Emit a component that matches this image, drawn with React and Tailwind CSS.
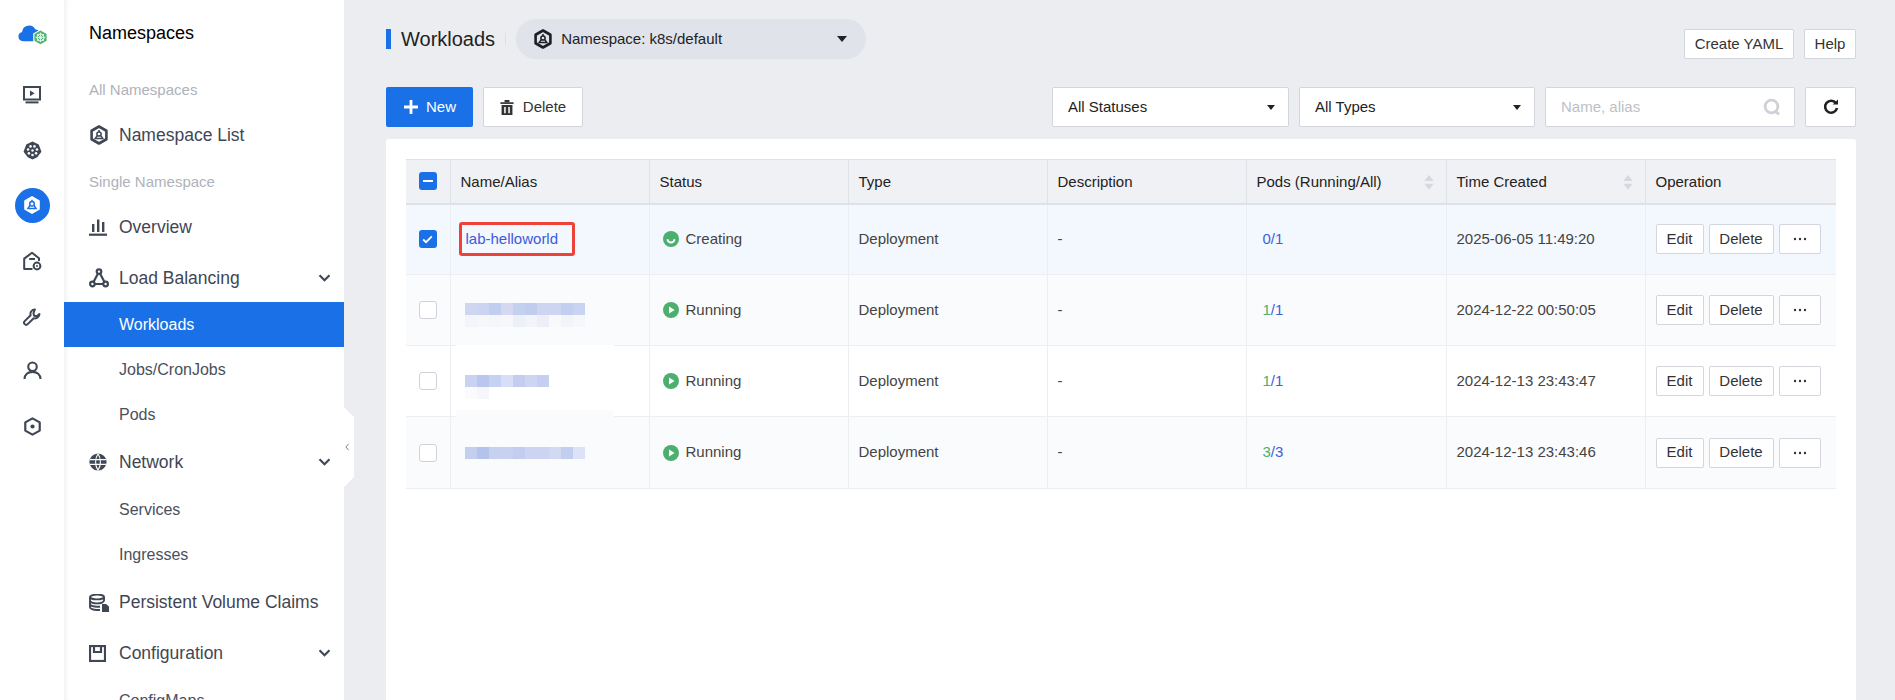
import React from "react";

const C = "#3f4654";

function NsIcon({ className = "", color = C }) {
  return (
    <svg viewBox="0 0 20 20" className={className} fill="none">
      <path d="M10 1.5 17.4 5.75V14.25L10 18.5 2.6 14.25V5.75Z" stroke={color} strokeWidth="2.6" strokeLinejoin="round" />
      <circle cx="10" cy="9" r="2.1" stroke={color} strokeWidth="1.5" />
      <path d="M8.3 10.6 6 13.6H14L11.7 10.6M10 6.9V5" stroke={color} strokeWidth="1.5" strokeLinejoin="round" />
    </svg>
  );
}

function Logo() {
  return (
    <svg viewBox="0 0 30 22" className="w-[30px] h-[22px]">
      <path d="M5 17.2a4.6 4.6 0 0 1-.9-9.1A7 7 0 0 1 17.4 5.6a5.8 5.8 0 0 1 6 5.6 5.8 5.8 0 0 1-5 6Z" fill="#1a70e6" />
      <path d="M22.5 5.2 29.8 9.4V17.4L22.5 21.6 15.2 17.4V9.4Z" fill="#fff" />
      <path d="M22.5 6.6 28.6 10.1V16.7L22.5 20.2 16.4 16.7V10.1Z" fill="#4fb172" />
      <circle cx="22.5" cy="13.4" r="3.4" fill="none" stroke="#e4f5ea" strokeWidth="1.1" />
      <path d="M22.5 8.6V18.2M17.7 13.4H27.3M19.1 10 25.9 16.8M25.9 10 19.1 16.8" stroke="#e4f5ea" strokeWidth=".9" />
    </svg>
  );
}

function ScreenIcon() {
  return (
    <svg viewBox="0 0 18 18" className="w-[18px] h-[18px]" fill="none">
      <rect x="1" y="1" width="16" height="12.5" stroke={C} strokeWidth="2" />
      <path d="M7 4.4V10.2L11.6 7.3Z" fill={C} />
      <rect x="2.5" y="15.4" width="13" height="2" fill={C} />
    </svg>
  );
}

function HelmIcon() {
  const dots = [0, 1, 2, 3, 4, 5, 6].map((i) => {
    const a = ((i + 0.5) * 2 * Math.PI) / 7 - Math.PI / 2;
    return [10 + 4.8 * Math.cos(a), 10 + 4.8 * Math.sin(a)];
  });
  return (
    <svg viewBox="0 0 20 20" className="w-[19px] h-[19px]" fill="none">
      <path d="M10 .4 16.6 3.6 19.4 11.2 15 17 10 19.6 5 17 .6 11.2 3.4 3.6Z" fill={C} />
      {dots.map(([x, y], i) => <circle key={i} cx={x} cy={y} r="1.35" fill="#fff" />)}
      <circle cx="10" cy="10" r="1.3" fill="#fff" />
    </svg>
  );
}

function HouseIcon() {
  return (
    <svg viewBox="0 0 20 20" className="w-[20px] h-[20px]" fill="none">
      <path d="M10.5 18H2.2V7.6L10 1.8 17 7.2V10" stroke={C} strokeWidth="2" strokeLinejoin="round" />
      <path d="M7.2 8H13" stroke={C} strokeWidth="2" />
      <circle cx="15" cy="15" r="3.4" stroke={C} strokeWidth="2" />
      <circle cx="15" cy="15" r="1" fill={C} />
    </svg>
  );
}

function WrenchIcon() {
  return (
    <svg viewBox="0 0 20 20" className="w-[18px] h-[18px]" fill="none">
      <path d="M13.2 1.6a4.9 4.9 0 0 0-4.7 6.4L1.9 14.6a2.3 2.3 0 0 0 3.3 3.3l6.7-6.6a4.9 4.9 0 0 0 6.4-4.7l-3 2.6-3-.6-.7-3Z" stroke={C} strokeWidth="2.2" strokeLinejoin="round" />
    </svg>
  );
}

function UserIcon() {
  return (
    <svg viewBox="0 0 20 20" className="w-[19px] h-[19px]" fill="none">
      <circle cx="10" cy="6" r="4.5" stroke={C} strokeWidth="2.2" />
      <path d="M1.6 19c0-4.6 3.6-7.6 8.4-7.6s8.4 3 8.4 7.6" stroke={C} strokeWidth="2.2" />
    </svg>
  );
}

function HexDotIcon() {
  return (
    <svg viewBox="0 0 20 20" className="w-[19px] h-[19px]" fill="none">
      <path d="M10 1.4 17.6 5.7V14.3L10 18.6 2.4 14.3V5.7Z" stroke={C} strokeWidth="2.3" strokeLinejoin="round" />
      <circle cx="10" cy="10" r="2.2" fill={C} />
    </svg>
  );
}

function BarsIcon() {
  return (
    <svg viewBox="0 0 18 18" className="w-[18px] h-[18px]" fill={C}>
      <rect x="3" y="6" width="2.4" height="8" />
      <rect x="8" y="1.5" width="2.4" height="12.5" />
      <rect x="13" y="4" width="2.4" height="10" />
      <rect x="0" y="15.6" width="18" height="2.2" />
    </svg>
  );
}

function LbIcon() {
  return (
    <svg viewBox="0 0 20 20" className="w-[20px] h-[20px]" fill="none" stroke={C} strokeWidth="2.2">
      <circle cx="10" cy="3.6" r="2.3" />
      <circle cx="3.4" cy="16" r="2.3" />
      <circle cx="16.6" cy="16" r="2.3" />
      <path d="M8.9 5.7 4.5 14M11.1 5.7 15.5 14M5.7 16H14.3" />
    </svg>
  );
}

function GlobeIcon() {
  return (
    <svg viewBox="0 0 18 18" className="w-[18px] h-[18px]">
      <circle cx="9" cy="9" r="8.6" fill={C} />
      <path d="M1 6.6H17M1 11.4H17M9 .8C5.8 5.5 5.8 12.5 9 17.2M9 .8C12.2 5.5 12.2 12.5 9 17.2" stroke="#fff" strokeWidth="1.1" fill="none" />
    </svg>
  );
}

function DbIcon() {
  return (
    <svg viewBox="0 0 20 18" className="w-[20px] h-[18px]" fill="none">
      <ellipse cx="8" cy="3" rx="7" ry="2.4" stroke={C} strokeWidth="1.9" />
      <path d="M1 3V13.2C1 14.6 4 16 8 16H11M1 6.6C1 8 4 9.4 8 9.4S15 8 15 6.6V3M1 10C1 11.4 4 12.8 8 12.8H11" stroke={C} strokeWidth="1.9" />
      <path d="M13 10H17L20 12.4V18H13Z" fill={C} />
    </svg>
  );
}

function SaveIcon() {
  return (
    <svg viewBox="0 0 17 17" className="w-[17px] h-[17px]" fill="none">
      <rect x="1" y="1" width="15" height="15" stroke={C} strokeWidth="2.2" />
      <path d="M5 1.5V7H12V1.5" stroke={C} strokeWidth="2.2" />
    </svg>
  );
}

function Chevron() {
  return (
    <svg viewBox="0 0 14 9" className="ml-auto mr-[13px] w-[13px] h-[8px]" fill="none">
      <path d="M1.4 1.4 7 7 12.6 1.4" stroke={C} strokeWidth="2.4" />
    </svg>
  );
}

function TopItem({ icon, label, arrow, className = "h-[46px]" }) {
  return (
    <div className={`flex items-center pl-[25px] text-[17.5px] text-[#3f4654] ${className}`}>
      <span className="w-[30px] flex items-center justify-start shrink-0">{icon}</span>
      <span>{label}</span>
      {arrow && <Chevron />}
    </div>
  );
}

function SubItem({ label, active }) {
  return (
    <div className={`h-[45px] flex items-center pl-[55px] text-[16px] ${active ? "bg-[#1a70e6] text-white" : "text-[#4a505c]"}`}>
      {label}
    </div>
  );
}

function Sidebar() {
  return (
    <div className="flex h-full shrink-0 relative">
      <div className="w-[64px] h-full flex flex-col items-center relative z-10 bg-white">
        <div className="h-[70px] w-full pl-[2px] flex items-center justify-center"><Logo /></div>
        <div className="h-[50px] flex items-center"><ScreenIcon /></div>
        <div className="h-[60px] flex items-center"><HelmIcon /></div>
        <div className="h-[50px] flex items-center">
          <div className="w-[35px] h-[35px] rounded-full bg-[#1a70e6] flex items-center justify-center">
            <svg viewBox="0 0 20 20" className="w-[20px] h-[20px]" fill="none">
              <path d="M10 1 17.8 5.5V14.5L10 19 2.2 14.5V5.5Z" fill="#fff" />
              <circle cx="10" cy="8.8" r="2.3" stroke="#1a70e6" strokeWidth="1.5" />
              <path d="M8 10.4 6 13.6H14L12 10.4M10 6.5V4.8" stroke="#1a70e6" strokeWidth="1.5" />
            </svg>
          </div>
        </div>
        <div className="h-[62px] flex items-center"><HouseIcon /></div>
        <div className="h-[50px] flex items-center"><WrenchIcon /></div>
        <div className="h-[57px] flex items-center"><UserIcon /></div>
        <div className="h-[55px] flex items-center"><HexDotIcon /></div>
      </div>
      <div className="w-[280px] h-full bg-white overflow-hidden shadow-[inset_6px_0_6px_-5px_rgba(0,0,0,0.08)]">
        <div className="h-[66px] flex items-center pl-[25px] text-[18px] text-black">Namespaces</div>
        <div className="h-[48px] flex items-center pl-[25px] text-[15px] text-[#aeb2ba]">All Namespaces</div>
        <TopItem icon={<NsIcon className="w-[20px] h-[20px]" />} label="Namespace List" className="h-[42px]" />
        <div className="h-[49px] flex items-center pl-[25px] pt-[3px] text-[15px] text-[#aeb2ba]">Single Namespace</div>
        <TopItem icon={<BarsIcon />} label="Overview" className="h-[44px]" />
        <TopItem icon={<LbIcon />} label="Load Balancing" arrow className="h-[48px] mt-[5px]" />
        <SubItem label="Workloads" active />
        <SubItem label="Jobs/CronJobs" />
        <SubItem label="Pods" />
        <TopItem icon={<GlobeIcon />} label="Network" arrow className="h-[50px]" />
        <SubItem label="Services" />
        <SubItem label="Ingresses" />
        <TopItem icon={<DbIcon />} label="Persistent Volume Claims" className="h-[51px]" />
        <TopItem icon={<SaveIcon />} label="Configuration" arrow className="h-[50px]" />
        <SubItem label="ConfigMaps" />
      </div>
      <div className="absolute left-[344px] top-[407px] w-[10px] h-[80px] bg-white [clip-path:polygon(0_0,100%_10px,100%_70px,0_100%)] flex items-center justify-center z-10">
        <svg viewBox="0 0 6 10" className="w-[5px] h-[8px] -ml-[3px]" fill="none">
          <path d="M4.5 1 1 5 4.5 9" stroke="#5a6270" strokeWidth="1" />
        </svg>
      </div>
    </div>
  );
}

const M = {
  a: [["#cfd6f2","#cbd4f1","#c2cef0","#d4d8f1","#c3d0f0","#c0cdef","#cdd5f1","#cdd5f1","#c3cff0","#c9d4f2"],
      ["#f4f5fa","#f6f7fb","#f5f6fa","#f6f7fb","#eef0f8","#f2f4f9","#edeff8","#f9f9fc","#f2f4fa","#f6f7fb"]],
  b: [["#c9d2f1","#b9c7ee","#c7d1f1","#d8def5","#c2cdf0","#cdd5f3","#c4cff1"],
      ["#fbfbfd","#f6f6fb"]],
  c: [["#c4cff0","#b4c3ec","#c6d0f0","#c8d1f0","#c3cdef","#ccd4f1","#ccd4f1","#d2d9f3","#c2cdef","#dde2f6"]],
};

function Mosaic({ rows }) {
  return (
    <svg width="120" height={rows.length * 12} className="block">
      {rows.map((r, y) => r.map((c, x) => <rect key={x} x={x * 12} y={y * 12} width="12" height="12" fill={c} />))}
    </svg>
  );
}

function Check({ state }) {
  if (state === "none")
    return <span className="block w-[18px] h-[18px] rounded-[3px] bg-white border border-[#cfd2da]" />;
  return (
    <span className="w-[18px] h-[18px] rounded-[3px] bg-[#1a70e6] flex items-center justify-center">
      {state === "minus" ? (
        <span className="w-[10px] h-[2px] bg-white" />
      ) : (
        <svg viewBox="0 0 12 10" className="w-[11px] h-[9px]" fill="none">
          <path d="M1.2 5 4.4 8 10.8 1.4" stroke="#fff" strokeWidth="2" />
        </svg>
      )}
    </span>
  );
}

function Btn({ children, className = "" }) {
  return (
    <button className={`bg-white border border-[#d3d6dd] rounded-[2px] text-[15px] text-[#333] flex items-center justify-center ${className}`}>
      {children}
    </button>
  );
}

function Status({ creating, label }) {
  return (
    <div className="flex items-center text-[15px] text-[#444]">
      <svg viewBox="0 0 16 16" className="w-[16px] h-[16px] mr-[7px]">
        <circle cx="8" cy="8" r="8" fill="#4caf6e" />
        {creating ? (
          <path d="M4.6 8.2a3.4 3.4 0 0 0 6.8 0" stroke="#fff" strokeWidth="2" fill="none" />
        ) : (
          <path d="M6 4.4V11.6L11.6 8Z" fill="#fff" />
        )}
      </svg>
      {label}
    </div>
  );
}

function Sort() {
  return (
    <svg viewBox="0 0 10 16" className="absolute right-[12px] top-[15px] w-[10px] h-[15px]">
      <path d="M5 0 10 6.4H0Z" fill="#d5d8de" />
      <path d="M5 15.6 0 9.2H10Z" fill="#d5d8de" />
    </svg>
  );
}

const th = "relative border-t border-b-2 border-[#dee1e7] border-r text-left font-normal px-[10px] pt-[2px] text-[15px] text-[#222]";
const td = "border-b border-r border-[#edeef2] text-[15px] text-[#444] px-[10px]";

const rows = [
  { id: 0, bg: "bg-[#f3f7fe]", status: "Creating", creating: true, pods: ["0", "/1"], numColor: "text-[#3b62db]", time: "2025-06-05 11:49:20", h: "h-[71px]" },
  { id: 1, bg: "bg-[#fafbfd]", status: "Running", mosaic: M.a, mt: "mt-[9px]", pods: ["1", "/1"], numColor: "text-[#4caf6e]", time: "2024-12-22 00:50:05", h: "h-[71px]" },
  { id: 2, bg: "bg-white", status: "Running", mosaic: M.b, mt: "mt-[11px]", pods: ["1", "/1"], numColor: "text-[#4caf6e]", time: "2024-12-13 23:43:47", h: "h-[71px]" },
  { id: 3, bg: "bg-[#fafbfd]", status: "Running", mosaic: M.c, mt: "mt-0", pods: ["3", "/3"], numColor: "text-[#4caf6e]", time: "2024-12-13 23:43:46", h: "h-[72px]" },
];

function Table() {
  return (
    <table className="w-full table-fixed border-collapse">
      <colgroup>
        <col className="w-[44px]" />
        <col className="w-[199px]" />
        <col className="w-[199px]" />
        <col className="w-[199px]" />
        <col className="w-[199px]" />
        <col className="w-[200px]" />
        <col className="w-[199px]" />
        <col />
      </colgroup>
      <thead>
        <tr className="h-[44px] bg-[#f0f1f5]">
          <th className={`${th} !px-0 !pt-0`}><span className="flex justify-center"><Check state="minus" /></span></th>
          <th className={th}>Name/Alias</th>
          <th className={th}>Status</th>
          <th className={th}>Type</th>
          <th className={th}>Description</th>
          <th className={th}>Pods (Running/All)<Sort /></th>
          <th className={th}>Time Created<Sort /></th>
          <th className={`${th} border-r-0`}>Operation</th>
        </tr>
      </thead>
      <tbody>
        {rows.map((r) => (
          <tr key={r.id} className={`${r.bg} ${r.h}`}>
            <td className={`${td} !px-0`}><span className="flex justify-center"><Check state={r.id === 0 ? "on" : "none"} /></span></td>
            <td className={`${td} relative`}>
              {r.id === 0 ? (
                <span className="flex items-center w-[116px] h-[34px] -ml-[2px] border-[3px] border-[#ee4239] rounded-[3px] pl-[4px] text-[#3b5bdb]">lab-helloworld</span>
              ) : (
                <div className={`pl-[4px] relative z-10 ${r.mt}`}><Mosaic rows={r.mosaic} /></div>
              )}
              {r.id === 2 && <span className="absolute left-[5px] top-[-1px] w-[158px] h-[6px] bg-white" />}
              {r.id === 2 && <span className="absolute left-[5px] bottom-[-1px] w-[158px] h-[7px] bg-[#fafbfd]" />}
            </td>
            <td className={td}><div className="pl-[3px]"><Status creating={r.creating} label={r.status} /></div></td>
            <td className={td}>Deployment</td>
            <td className={td}>-</td>
            <td className={td}>
              <span className="pl-[6px]"><span className={r.numColor}>{r.pods[0]}</span><span className="text-[#3b62db]">{r.pods[1]}</span></span>
            </td>
            <td className={td}>{r.time}</td>
            <td className={`${td} border-r-0`}>
              <div className="flex gap-[5px] -mr-[11px]">
                <Btn className="w-[48px] h-[30px]">Edit</Btn>
                <Btn className="w-[65px] h-[30px]">Delete</Btn>
                <Btn className="w-[42px] h-[30px]">
                  <svg viewBox="0 0 14 4" className="w-[14px] h-[4px]" fill="#333">
                    <circle cx="2" cy="2" r="1.2" /><circle cx="7" cy="2" r="1.2" /><circle cx="12" cy="2" r="1.2" />
                  </svg>
                </Btn>
              </div>
            </td>
          </tr>
        ))}
      </tbody>
    </table>
  );
}

function Select({ label, className = "" }) {
  return (
    <div className={`h-[40px] bg-white border border-[#d3d6dd] rounded-[2px] flex items-center pl-[15px] pr-[13px] text-[15px] text-[#222] ${className}`}>
      {label}
      <span className="ml-auto w-0 h-0 border-x-[4px] border-x-transparent border-t-[5px] border-t-[#222]" />
    </div>
  );
}

export default function App() {
  return (
    <div className="flex w-full h-[700px] overflow-hidden bg-[#ebedf1] font-['Liberation_Sans',Arial,sans-serif]">
      <Sidebar />
      <main className="flex-1 min-w-0 h-full pl-[42px] pr-[39px] flex flex-col">
        <div className="flex items-start pt-[19px] h-[59px] shrink-0">
          <div className="flex items-center h-[40px]">
            <span className="w-[5px] h-[20px] bg-[#1a70e6]" />
            <span className="ml-[10px] text-[20px] text-[#222]">Workloads</span>
            <span className="ml-[10px] w-px h-[12px] bg-[#dcdfe5]" />
            <div className="ml-[10px] w-[350px] h-[40px] rounded-full bg-[#e0e3ea] flex items-center pl-[17px] pr-[19px] text-[15px] text-[#222]">
              <NsIcon className="w-[20px] h-[20px]" color="#1c1f26" />
              <span className="ml-[8px]">Namespace: k8s/default</span>
              <span className="ml-auto w-0 h-0 border-x-[5px] border-x-transparent border-t-[6px] border-t-[#222]" />
            </div>
          </div>
          <div className="ml-auto flex gap-[10px] mt-[10px]">
            <Btn className="w-[110px] h-[30px]">Create YAML</Btn>
            <Btn className="w-[52px] h-[30px]">Help</Btn>
          </div>
        </div>
        <div className="flex items-center mt-[28px] h-[40px] shrink-0">
          <button className="w-[87px] h-[40px] bg-[#1a70e6] text-white rounded-[2px] text-[15px] flex items-center justify-center">
            <svg viewBox="0 0 16 16" className="w-[16px] h-[16px] mr-[7px]"><path d="M8 1V15M1 8H15" stroke="#fff" strokeWidth="2.8" /></svg>
            New
          </button>
          <Btn className="w-[100px] h-[40px] ml-[10px]">
            <svg viewBox="0 0 14 16" className="w-[14px] h-[15px] mr-[9px]" fill="#333">
              <rect x="0" y="2.4" width="14" height="1.8" /><rect x="4.4" y="0" width="5.2" height="2.4" />
              <path d="M1.2 5.4H12.8V16H1.2ZM4 7.4V14H5.6V7.4ZM8.4 7.4V14H10V7.4Z" fillRule="evenodd" />
            </svg>
            Delete
          </Btn>
          <div className="ml-auto flex gap-[10px]">
            <Select label="All Statuses" className="w-[237px]" />
            <Select label="All Types" className="w-[236px]" />
            <div className="w-[250px] h-[40px] bg-white border border-[#d3d6dd] rounded-[2px] flex items-center pl-[15px] pr-[13px] text-[15px] text-[#bcbfc6]">
              Name, alias
              <svg viewBox="0 0 18 18" className="ml-auto w-[18px] h-[18px]" fill="none" stroke="#cfd1d6" strokeWidth="2.8">
                <circle cx="8.5" cy="8.5" r="6.4" /><path d="M12.5 13 16 16.4" />
              </svg>
            </div>
            <Btn className="w-[51px] h-[40px]">
              <svg viewBox="0 0 16 16" className="w-[16px] h-[16px]" fill="none">
                <path d="M13 4.2A6 6 0 1 0 14 9" stroke="#222" strokeWidth="2.6" />
                <path d="M9.6 5.6H15V.6Z" fill="#222" />
              </svg>
            </Btn>
          </div>
        </div>
        <div className="mt-[12px] flex-1 min-h-0 bg-white rounded-t-[3px] p-[20px]">
          <Table />
        </div>
      </main>
    </div>
  );
}
